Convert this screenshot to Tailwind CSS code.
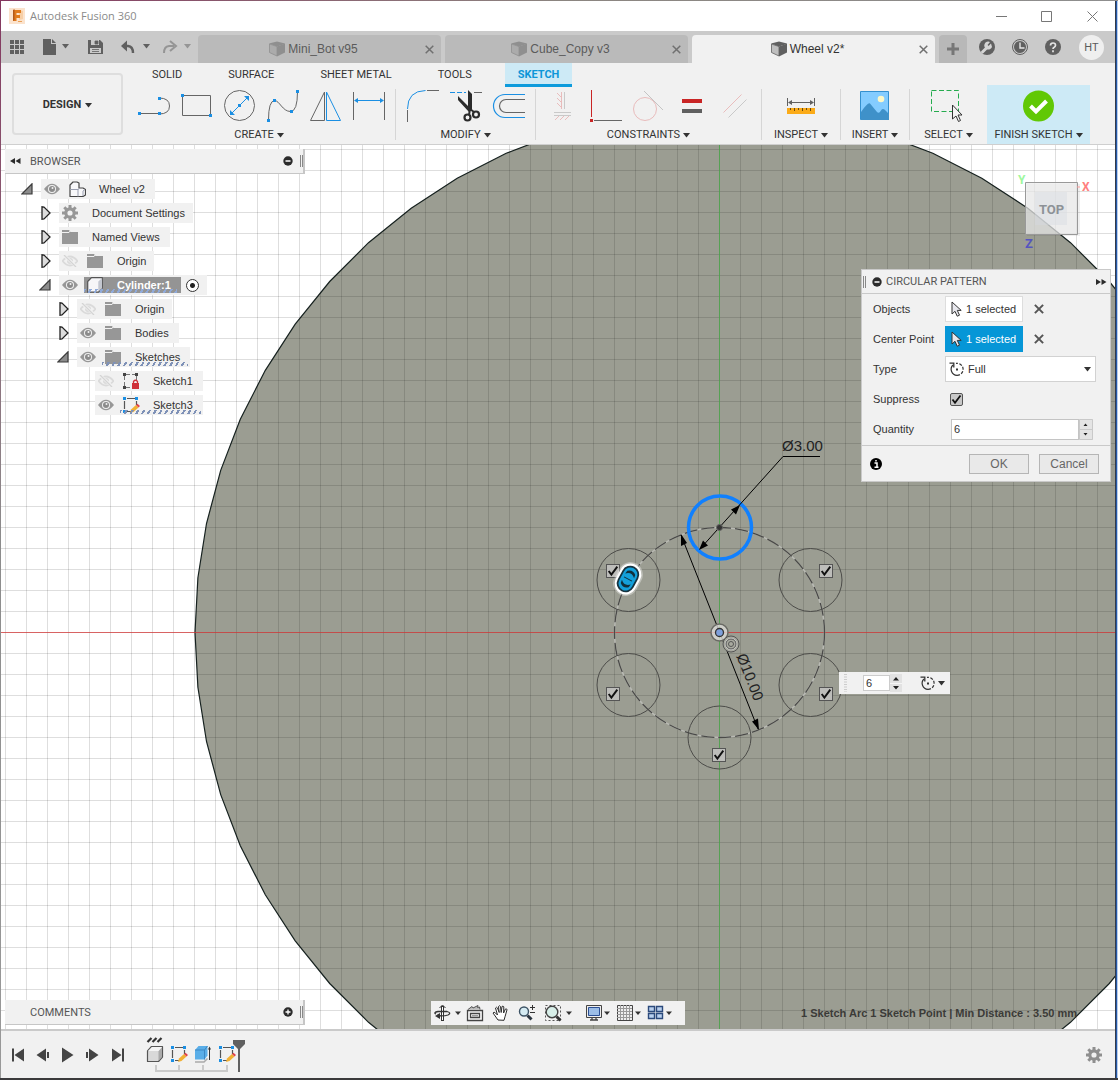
<!DOCTYPE html>
<html lang="en">
<head>
<meta charset="utf-8">
<meta name="viewport" content="width=device-width, initial-scale=1">
<title>Autodesk Fusion 360</title>
<script src="https://cdn.jsdelivr.net/npm/@tailwindcss/browser@4"></script>
</head>
<body class="flex h-screen flex-col overflow-hidden bg-[#3b3a3c] font-['Liberation_Sans',Arial,sans-serif] text-[11px] text-[#333]">

<svg class="hidden" aria-hidden="true">
  <symbol id="caret" viewBox="0 0 7 5"><path d="M0 0h7L3.5 4.5z" fill="currentColor"/></symbol>
  <symbol id="close" viewBox="0 0 9 9"><path d="M.7.7l7.6 7.6M8.3.7L.7 8.3" stroke="currentColor" stroke-width="1.500" fill="none"/></symbol>
  <symbol id="cube" viewBox="0 0 16 16"><path d="M0 2.500L8 .5l8 2-2 1-6 2z" fill="currentColor"/><path d="M.5 3v8.500L8 15V5.500z" fill="currentColor" fill-opacity=".35" stroke="currentColor" stroke-width=".8"/><path d="M16 2.500v9L8 15.500V5.500z" fill="currentColor"/></symbol>
  <symbol id="eye" viewBox="0 0 16 12"><path d="M0 6Q8-4.500 16 6Q8 16.500 0 6z" fill="#979797"/><circle cx="8" cy="6" r="4" fill="#f1f1f1"/><circle cx="8" cy="6" r="3" fill="#8b8b8b"/><circle cx="8.500" cy="5" r="1" fill="#f1f1f1"/></symbol>
  <symbol id="eyeoff" viewBox="0 0 16 12"><path d="M.500 6Q8-3 15.500 6Q8 15 .500 6z" fill="none" stroke="#dadada" stroke-width="1.800"/><circle cx="8" cy="6" r="3" fill="#dadada"/><path d="M1.500 0L15 12" stroke="#f1f1f1" stroke-width="3"/><path d="M2 0L14 12" stroke="#d4d4d4" stroke-width="1.300"/></symbol>
  <symbol id="folder" viewBox="0 0 16 14"><path d="M0 0h7l1.500 2H16v12H0z" fill="#979797"/><path d="M0 2.500h7l1-1.500" stroke="#f1f1f1" fill="none"/></symbol>
  <symbol id="gear" viewBox="0 0 16 16"><circle cx="8" cy="8" r="4.200" fill="none" stroke="currentColor" stroke-width="3.200"/><path d="M8 0v3M8 13v3M0 8h3M13 8h3M2.300 2.300l2.200 2.200M11.500 11.500l2.200 2.200M13.700 2.300l-2.200 2.200M4.500 11.500l-2.200 2.200" stroke="currentColor" stroke-width="3"/></symbol>
  <symbol id="closed" viewBox="0 0 10 14"><path d="M1 .8V13.200L3 13l6-6-6-6z" fill="#dcdcdc" stroke="#222" stroke-width="1.300"/></symbol>
  <symbol id="opened" viewBox="0 0 12 12"><path d="M11 .8V11H.8z" fill="#8c8c8c" stroke="#3a3a3a" stroke-width="1.200"/></symbol>
  <symbol id="body" viewBox="0 0 16 16"><path d="M.7 4.500L4.500.7h10.800v10.500l-4 4H.7z" fill="#f6f6f8" stroke="#555" stroke-width="1.200" stroke-linejoin="round"/><path d="M11.300 4.500l3.600-3.300v10l-3.600 3.300z" fill="#c3c7d0"/></symbol>
  <symbol id="sketch" viewBox="0 0 18 18"><path d="M5 2.500h8M2.500 5v8M14.500 5v4M5 15.500h4" stroke="#555" stroke-width="1.200"/><path d="M1 1h3v3H1zM13 1h3v3h-3zM1 14h3v3H1z" fill="#1b8fe3"/><path d="M8 17l1-3.500 5-4.500 2.500 2.500-5 4.500z" fill="#f2b134"/><path d="M14 9l1.500-1.200L18 10l-1.500 1.500z" fill="#e2424c"/></symbol>
  <symbol id="cursor" viewBox="0 0 11 16"><path d="M1 1v12l3-2.700 2.200 4.900 2.300-1-2.200-4.800h3.900z" fill="#e8e8ee" stroke="#333" stroke-width="1"/></symbol>
  <symbol id="full" viewBox="0 0 15 14"><path d="M4 3A6 6 0 0 0 8 13.300" fill="none" stroke="#333" stroke-width="1.200"/><path d="M8 13.300A6 6 0 1 0 7 1.400" fill="none" stroke="#333" stroke-width="1.200" stroke-dasharray="3 1.500"/><path d="M.5 1.200h4.300v4.300" fill="none" stroke="#333" stroke-width="1.300"/><path d="M7 6.500h2v2H7z" fill="#333"/></symbol>
  <symbol id="tick" viewBox="0 0 13 13"><path d="M2.500 6.500L5 9.800 10.500 2.500" fill="none" stroke="#111" stroke-width="1.800"/></symbol>
  <symbol id="minus" viewBox="0 0 10 10"><circle cx="5" cy="5" r="4.700" fill="#2b2b2b"/><path d="M2.500 5h5" stroke="#fff" stroke-width="1.500"/></symbol>
</svg>

<div class="h-px shrink-0 bg-linear-to-r from-[#83365f] via-[#8b8580] to-[#8e8e8e]"></div>

<div class="flex min-h-0 flex-1">
  <div class="w-px shrink-0 bg-linear-to-b from-[#83365f] via-[#8c8c8c] to-[#999]"></div>

  <main class="flex min-w-0 flex-1 flex-col bg-[#f1f1f1]">

    <header class="flex h-[30px] shrink-0 items-center bg-white pl-2">
      <svg class="size-4" viewBox="0 0 16 16"><path d="M0 0h16v16H0z" fill="#fbe3cd"/><path d="M10 2l4 1v8l-4 1z" fill="#f7cfa6"/><path d="M4 2h8v3H7.500v2H11v3H7.500v3H4z" fill="#e07b1e"/><path d="M4 2l1.500-1v11L4 13z" fill="#b3591a"/><path d="M9 13.500h4" stroke="#e9a15a"/></svg>
      <h1 class="pl-[5px] font-['Open_Sans',sans-serif] text-[11px] text-[#8a8a8a]">Autodesk Fusion 360</h1>
      <div class="ml-auto flex text-[#777]">
        <button aria-label="Minimize" class="grid h-[30px] w-[45px] place-items-center"><svg class="size-[11px]" viewBox="0 0 11 11"><path d="M0 5.500h11" stroke="currentColor"/></svg></button>
        <button aria-label="Maximize" class="grid h-[30px] w-[45px] place-items-center"><svg class="size-[11px]" viewBox="0 0 11 11"><path d="M.5.5h10v10H.5z" fill="none" stroke="currentColor"/></svg></button>
        <button aria-label="Close" class="grid h-[30px] w-[46px] place-items-center"><svg class="size-[11px]" viewBox="0 0 11 11"><path d="M.5.5l10 10M10.500.5l-10 10" stroke="currentColor"/></svg></button>
      </div>
    </header>

    <div class="flex h-8 shrink-0 items-end bg-[#cacaca] text-xs text-[#5b5b5b]">
      <div class="flex h-8 w-[197px] shrink-0 items-center">
        <button aria-label="Show data panel"><svg class="h-8 w-8" viewBox="1 31 32 32"><path d="M10 40h4v4h-4zM15 40h4v4h-4zM20 40h4v4h-4zM10 45h4v4h-4zM15 45h4v4h-4zM20 45h4v4h-4zM10 50h4v4h-4zM15 50h4v4h-4zM20 50h4v4h-4z" fill="#606060"/></svg></button>
        <button aria-label="File"><svg class="h-8 w-11" viewBox="33 31 44 32"><path d="M43 39h8v5h5v11H43z" fill="#606060"/><path d="M52 39l4 4h-4z" fill="#606060"/><path d="M62 44h7l-3.500 4.500z" fill="#606060"/></svg></button>
        <button aria-label="Save"><svg class="h-8 w-9" viewBox="77 31 36 32"><path d="M88 40h12l3 3v11H88z" fill="#606060"/><path d="M91 40h8v5h-8zM90 48h11v5H90z" fill="#cacaca"/><path d="M95 41h3v3h-3zM92 49.500h7M92 51.500h7" fill="#606060" stroke="#606060" stroke-width=".8"/></svg></button>
        <button aria-label="Undo"><svg class="h-8 w-10" viewBox="113 31 40 32"><path d="M123 46h5q5 .5 5 7" fill="none" stroke="#606060" stroke-width="2.400"/><path d="M121 46l6-5.500v11z" fill="#606060"/><path d="M143 44h7l-3.500 4.500z" fill="#606060"/></svg></button>
        <button aria-label="Redo"><svg class="h-8 w-10" viewBox="153 31 40 32"><path d="M174 46h-5q-5 .5-5 7" fill="none" stroke="#959595" stroke-width="2"/><path d="M170 41l6 5-6 5" fill="none" stroke="#959595" stroke-width="2"/><path d="M184 44h7l-3.500 4.500z" fill="#959595"/></svg></button>
      </div>
      <div class="flex min-w-0 flex-1 gap-1" role="tablist">
        <div role="tab" class="flex h-7 flex-1 items-center rounded-t-sm bg-[#bababa] pr-[7px]"><span class="flex flex-1 items-center justify-center gap-[3px] pl-1"><svg class="size-4 text-[#8f8f8f]"><use href="#cube"/></svg>Mini_Bot v95</span><button aria-label="Close Mini_Bot v95"><svg class="size-[9px] text-[#707070]"><use href="#close"/></svg></button></div>
        <div role="tab" class="flex h-7 flex-1 items-center rounded-t-sm bg-[#bababa] pr-[7px]"><span class="flex flex-1 items-center justify-center gap-[3px] pl-1"><svg class="size-4 text-[#8f8f8f]"><use href="#cube"/></svg>Cube_Copy v3</span><button aria-label="Close Cube_Copy v3"><svg class="size-[9px] text-[#707070]"><use href="#close"/></svg></button></div>
        <div role="tab" aria-selected="true" class="flex h-7 flex-1 items-center rounded-t-sm bg-[#f1f1f1] pr-[7px] text-[#333]"><span class="flex flex-1 items-center justify-center gap-[3px] pl-1"><svg class="size-4 text-[#606060]"><use href="#cube"/></svg>Wheel v2*</span><button aria-label="Close Wheel v2"><svg class="size-[9px] text-[#707070]"><use href="#close"/></svg></button></div>
      </div>
      <button aria-label="New tab" class="ml-1 grid h-7 w-7 place-items-center rounded-t-sm bg-[#b8b8b8]"><svg class="size-3" viewBox="0 0 12 12"><path d="M6 0v12M0 6h12" stroke="#777" stroke-width="3"/></svg></button>
      <div class="flex h-8 w-[148px] shrink-0 items-center">
        <button aria-label="Extensions"><svg class="h-8 w-9" viewBox="967 31 36 32"><circle cx="987" cy="47" r="8" fill="#606060"/><path d="M982.500 52l5-5" stroke="#d5d5d5" stroke-width="3" stroke-linecap="round"/><path d="M991 43.500l-2.500 2.500-1-1 2.500-3a4 4 0 1 0 2 5z" fill="#d5d5d5"/></svg></button>
        <button aria-label="Job status"><svg class="h-8 w-[34px]" viewBox="1003 31 34 32"><circle cx="1020" cy="47" r="7.500" fill="none" stroke="#606060"/><circle cx="1020" cy="47" r="6" fill="#606060"/><path d="M1020 42.500V48h4.500" stroke="#e5e5e5" stroke-width="1.400" fill="none"/></svg></button>
        <button aria-label="Help"><svg class="h-8 w-8" viewBox="1037 31 32 32"><circle cx="1053" cy="47" r="8" fill="#606060"/><path d="M1050.500 45.500q0-2.500 2.500-2.500t2.500 2.200q0 1.300-1.300 2-1.200.6-1.200 1.800M1053 50.300v1.900" fill="none" stroke="#e5e5e5" stroke-width="1.700"/></svg></button>
        <button aria-label="Account" class="ml-[10px] grid size-[25px] place-items-center rounded-full bg-[#efefef] pt-[2px] font-['Roboto',sans-serif] text-[11px]">HT</button>
      </div>
    </div>

    <section class="flex h-[82px] shrink-0 border-b border-[#cfcfcf] pl-[11px] font-['Roboto',sans-serif]">
      <button class="mt-[10px] flex h-[62px] w-[111px] shrink-0 items-center justify-center gap-[3px] rounded-sm border-2 border-[#dedede] pt-[2px] font-bold">DESIGN<svg class="ml-px h-[5px] w-[7px]"><use href="#caret"/></svg></button>
      <div class="min-w-0 flex-1">
        <nav class="flex h-[22px] items-start gap-5 pl-4 leading-6">
          <a href="#" class="px-[13px]">SOLID</a><a href="#" class="px-[13px]">SURFACE</a><a href="#" class="px-[13px]">SHEET METAL</a><a href="#" class="px-[13px]">TOOLS</a>
          <a href="#" class="z-10 h-6 border-b-[3px] border-[#0d9bdc] bg-[#cdeaf6] px-[13px] font-bold text-[#0d96d8]">SKETCH</a>
        </nav>
        <div class="flex h-[59px]">
          <div class="w-[272px] shrink-0 pt-[3px]">
            <div class="flex justify-center">
              <button aria-label="Line"><svg class="h-9 w-[43px]" viewBox="130 88 43 36"><path d="M139 113.500h20M159 98q10.500 0 10.500 8t-10.500 8" fill="none" stroke="#666"/><path d="M138 112h3v3h-3zM158 112h3v3h-3zM158 97h3v3h-3z" fill="#1b8fe3"/></svg></button>
              <button aria-label="Rectangle"><svg class="h-9 w-[43px]" viewBox="173 88 43 36"><path d="M182.500 95.500h28v20h-28z" fill="none" stroke="#666"/><path d="M181 94h3v3h-3zM209 114h3v3h-3z" fill="#1b8fe3"/></svg></button>
              <button aria-label="Circle"><svg class="h-9 w-[43px]" viewBox="216 88 43 36"><circle cx="239.500" cy="105.500" r="15" fill="none" stroke="#666"/><path d="M231 114l17-17" stroke="#1b8fe3"/><path d="M249 96v5l-5-5zM230 115v-5l5 5zM238 104h3v3h-3z" fill="#1b8fe3"/></svg></button>
              <button aria-label="Spline"><svg class="h-9 w-[43px]" viewBox="259 88 43 36"><path d="M268.500 120q0-19 6-19.500c5 0 8 11 16 11q7 0 7-20" fill="none" stroke="#666"/><path d="M267 119h3v3h-3zM273 99h3v3h-3zM290 110h3v3h-3zM296 90h3v3h-3z" fill="#1b8fe3"/></svg></button>
              <button aria-label="Mirror"><svg class="h-9 w-[43px]" viewBox="302 88 43 36"><path d="M324.500 92v28.500h-14z" fill="none" stroke="#666"/><path d="M326.500 92v28.500h14z" fill="none" stroke="#1b8fe3"/></svg></button>
              <button aria-label="Dimension"><svg class="h-9 w-[43px]" viewBox="345 88 43 36"><path d="M353.500 92v28M384.500 92v28" stroke="#666"/><path d="M355 100.500h28" stroke="#1b8fe3"/><path d="M354 100.500l4-2.500v5zM384 100.500l-4-2.500v5z" fill="#1b8fe3"/></svg></button>
            </div>
            <button class="mx-auto flex h-5 items-center gap-[3px] pt-[2px]">CREATE<svg class="h-[5px] w-[7px]"><use href="#caret"/></svg></button>
          </div>
          <div class="mt-1 mb-1 w-px bg-[#d6d6d6]"></div>
          <div class="w-[139px] shrink-0 pt-[3px]">
            <div class="flex justify-center">
              <button aria-label="Fillet"><svg class="h-9 w-[43px]" viewBox="401 88 43 36"><path d="M407.500 109q0-18 18-18.500" fill="none" stroke="#1b8fe3"/><path d="M407.500 110v12M427 90.500h12" stroke="#666"/></svg></button>
              <button aria-label="Trim"><svg class="h-9 w-[43px]" viewBox="444 88 43 36"><path d="M450 92.500h16" stroke="#1b8fe3" stroke-dasharray="5 2"/><path d="M474 92.500h8" stroke="#666"/><path d="M468 90l4 4v16l-4-2zM458 96l13 13-2 3-11-12z" fill="#2b2b2b"/><circle cx="467.500" cy="117.500" r="3" fill="none" stroke="#2b2b2b" stroke-width="2.200"/><circle cx="476" cy="114.500" r="3" fill="none" stroke="#2b2b2b" stroke-width="2.200"/><path d="M469 115l1-6 4 3" stroke="#2b2b2b" stroke-width="2" fill="none"/></svg></button>
              <button aria-label="Offset"><svg class="h-9 w-[43px]" viewBox="487 88 43 36"><path d="M525 94.500h-20a11.500 11.500 0 0 0 0 23h20" fill="none" stroke="#1b8fe3" stroke-width="1.200"/><path d="M525 99.500h-19a6.500 6.500 0 0 0 0 13h19" fill="none" stroke="#666" stroke-width="1.200"/></svg></button>
            </div>
            <button class="mx-auto flex h-5 items-center gap-[3px] pt-[2px]">MODIFY<svg class="h-[5px] w-[7px]"><use href="#caret"/></svg></button>
          </div>
          <div class="mt-1 mb-1 w-px bg-[#d6d6d6]"></div>
          <div class="w-[225px] shrink-0 pt-[3px]">
            <div class="flex justify-center">
              <button aria-label="Horizontal/Vertical"><svg class="h-9 w-[43px]" viewBox="541 88 43 36"><path d="M564.500 92v17M554 112.500h17M554 115.500h17" stroke="#c9c9c9"/><path d="M561.500 92v17M557 93l4 4M557 98l4 4M557 103l4 4M555 120l4-4M560 120l4-4M565 120l4-4" stroke="#e9bcbc"/></svg></button>
              <button aria-label="Perpendicular"><svg class="h-9 w-[43px]" viewBox="584 88 43 36"><path d="M591.500 90v27" stroke="#c92525"/><path d="M594 120.500h28" stroke="#666"/><path d="M590 119h3v3h-3z" fill="#c92525"/></svg></button>
              <button aria-label="Tangent"><svg class="h-9 w-[43px]" viewBox="627 88 43 36"><circle cx="645" cy="109" r="11.500" fill="none" stroke="#e9bcbc"/><path d="M644 91l19 19" stroke="#c4c4c4"/></svg></button>
              <button aria-label="Equal"><svg class="h-9 w-[43px]" viewBox="670 88 43 36"><path d="M682 99h20v4h-20z" fill="#c92525"/><path d="M682 109h20v4h-20z" fill="#606060"/></svg></button>
              <button aria-label="Parallel"><svg class="h-9 w-[43px]" viewBox="713 88 43 36"><path d="M723.500 112.500l18-18" stroke="#e9bcbc"/><path d="M728.500 117.500l18-18" stroke="#c9c9c9"/></svg></button>
            </div>
            <button class="mx-auto flex h-5 items-center gap-[3px] pt-[2px]">CONSTRAINTS<svg class="h-[5px] w-[7px]"><use href="#caret"/></svg></button>
          </div>
          <div class="mt-1 mb-1 w-px bg-[#d6d6d6]"></div>
          <div class="w-[78px] shrink-0 pt-[3px]">
            <button aria-label="Measure" class="mx-auto block"><svg class="h-9 w-[42px]" viewBox="780 88 42 36"><path d="M787.500 98v8M814.500 98v8M789 102.500h24" stroke="#606060"/><path d="M788 102.500l4-2.500v5zM814 102.500l-4-2.500v5z" fill="#606060"/><path d="M787 108h28v6h-28z" fill="#fbab18"/><path d="M790.500 108v2M794.500 108v3M798.500 108v2M802.500 108v3M806.500 108v2M810.500 108v3" stroke="#6b4a10"/></svg></button>
            <button class="mx-auto flex h-5 items-center gap-[3px] pt-[2px]">INSPECT<svg class="h-[5px] w-[7px]"><use href="#caret"/></svg></button>
          </div>
          <div class="mt-1 mb-1 w-px bg-[#d6d6d6]"></div>
          <div class="w-[68px] shrink-0 pt-[3px]">
            <button aria-label="Insert image" class="mx-auto block"><svg class="h-9 w-[42px]" viewBox="854 88 42 36"><path d="M860.500 91.500h28v28h-28z" fill="#84ccff" stroke="#3490cf"/><path d="M861 112q7-10 9-8.500l7 8.500q2 2 4-1.500 2-3 5 .5l3 3v6h-28z" fill="#3f91c9"/><circle cx="881" cy="99" r="3.300" fill="#fdf8c8"/></svg></button>
            <button class="mx-auto flex h-5 items-center gap-[3px] pt-[2px]">INSERT<svg class="h-[5px] w-[7px]"><use href="#caret"/></svg></button>
          </div>
          <div class="mt-1 mb-1 w-px bg-[#d6d6d6]"></div>
          <div class="w-[77px] shrink-0 pt-[3px]">
            <button aria-label="Select" class="mx-auto block"><svg class="h-9 w-[43px]" viewBox="927 88 43 36"><path d="M931.500 90.500h27v21h-27z" fill="none" stroke="#25ab4e" stroke-dasharray="5 2.500"/><path d="M952.500 105v14l3.500-3 2.500 5.500 2-1-2.500-5.500h4z" fill="#f5f5f5" stroke="#333"/></svg></button>
            <button class="mx-auto flex h-5 items-center gap-[3px] pt-[2px]">SELECT<svg class="h-[5px] w-[7px]"><use href="#caret"/></svg></button>
          </div>
          <div class="w-[103px] shrink-0 bg-[#cdeaf6] pt-[3px]">
            <button aria-label="Finish sketch" class="mx-auto block"><svg class="h-9 w-[43px]" viewBox="1017 88 43 36"><circle cx="1038.500" cy="106" r="15.500" fill="#61c805"/><path d="M1030.500 106l5.500 5.500 10.500-10.500" fill="none" stroke="#fff" stroke-width="4"/></svg></button>
            <button class="mx-auto flex h-5 items-center gap-[3px] pt-[2px] whitespace-nowrap">FINISH SKETCH<svg class="h-[5px] w-[7px]"><use href="#caret"/></svg></button>
          </div>
        </div>
      </div>
    </section>

    <section class="relative min-h-0 flex-1 overflow-hidden bg-white">
      <svg class="absolute inset-0 h-full w-full" role="img" aria-label="Wheel sketch">
        <defs>
          <pattern id="grid" width="21" height="21" patternUnits="userSpaceOnUse" x="5" y="2"><path d="M0 .5h21M.5 0v21" stroke="#000" stroke-opacity=".13"/></pattern>
        </defs>
        <g transform="translate(-1 -145)">
          <polygon id="wheel" fill="#9b9d92" stroke="#16211f" stroke-width="1.200"/>
          <rect width="4000" height="3000" fill="url(#grid)"/>
          <path d="M719.500 0v3000" stroke="#4aa84a" stroke-opacity=".8"/>
          <path d="M0 632.500h4000" stroke="#d63a3a" stroke-opacity=".75"/>

          <circle cx="719.500" cy="632.500" r="105" fill="none" stroke="#b9bab4" stroke-width="1.500"/>
          <circle cx="719.500" cy="632.500" r="105" fill="none" stroke="#4a4a48" stroke-width="1.300" stroke-dasharray="13 4"/>
          <g fill="none" stroke="#4c4c49"><circle cx="628.500" cy="580" r="31.500"/><circle cx="810.500" cy="580" r="31.500"/><circle cx="628.500" cy="685" r="31.500"/><circle cx="810.500" cy="685" r="31.500"/><circle cx="719.500" cy="737.500" r="31.500"/></g>
          <circle cx="720" cy="527.500" r="31.500" fill="none" stroke="#1080ff" stroke-width="3.500"/>

          <path d="M681 535l77 194M700 549l83-92.500h37" fill="none" stroke="#000"/>
          <path d="M681 534l6 9-6 3zM759 730l-7-8.500 6-3zM740 505l-4 9.500-5-5zM699 550l4-9.500 5 5z" fill="#000"/>
          <circle cx="719.500" cy="527.500" r="3" fill="#333" stroke="#666"/>
          <circle cx="719.500" cy="632.500" r="8.500" fill="#dcdcd8" fill-opacity=".8" stroke="#6a6a64" stroke-width="1.500"/>
          <circle cx="719.500" cy="632.500" r="4" fill="#7ea0dc" stroke="#333" stroke-width="1.300"/>
          <g fill="none" stroke="#555"><circle cx="731" cy="644" r="8" fill="#a9aaa0"/><circle cx="731" cy="644" r="5.500" stroke="#ddd"/><circle cx="731" cy="644" r="5"/><circle cx="731" cy="644" r="2.500"/></g>
          <g font-size="15" fill="#222"><text x="782" y="451">Ø3.00</text><text transform="translate(750 677) rotate(68.400)" y="5" text-anchor="middle">Ø10.00</text></g>
        </g>
      </svg>

      <label class="absolute top-[419px] left-[605px] grid size-[14px]"><input type="checkbox" checked aria-label="Instance 2" class="col-start-1 row-start-1 size-[14px] appearance-none border border-[#555] bg-[#bdbdba]"><svg class="pointer-events-none col-start-1 row-start-1 size-[14px]"><use href="#tick"/></svg></label>
      <label class="absolute top-[419px] left-[818px] grid size-[14px]"><input type="checkbox" checked aria-label="Instance 6" class="col-start-1 row-start-1 size-[14px] appearance-none border border-[#555] bg-[#bdbdba]"><svg class="pointer-events-none col-start-1 row-start-1 size-[14px]"><use href="#tick"/></svg></label>
      <label class="absolute top-[542px] left-[605px] grid size-[14px]"><input type="checkbox" checked aria-label="Instance 3" class="col-start-1 row-start-1 size-[14px] appearance-none border border-[#555] bg-[#bdbdba]"><svg class="pointer-events-none col-start-1 row-start-1 size-[14px]"><use href="#tick"/></svg></label>
      <label class="absolute top-[542px] left-[818px] grid size-[14px]"><input type="checkbox" checked aria-label="Instance 5" class="col-start-1 row-start-1 size-[14px] appearance-none border border-[#555] bg-[#bdbdba]"><svg class="pointer-events-none col-start-1 row-start-1 size-[14px]"><use href="#tick"/></svg></label>
      <label class="absolute top-[603px] left-[711px] grid size-[14px]"><input type="checkbox" checked aria-label="Instance 4" class="col-start-1 row-start-1 size-[14px] appearance-none border border-[#555] bg-[#bdbdba]"><svg class="pointer-events-none col-start-1 row-start-1 size-[14px]"><use href="#tick"/></svg></label>

      <svg class="absolute top-[414px] left-[607px] h-10 w-10" viewBox="-20 -20 40 40"><g transform="rotate(28)"><rect x="-12.500" y="-17.500" width="25" height="35" rx="12.500" fill="#fff" fill-opacity=".35"/><rect x="-11" y="-16" width="22" height="32" rx="11" fill="#fff"/><rect x="-8" y="-13" width="16" height="26" rx="8" fill="#14a0da" stroke="#17333f" stroke-width="1.800"/><path d="M-5-3.500Q0-8.500 5-3.500L4.500-7q-4.500-4-9 0zM-5 3.500Q0 8.500 5 3.500L4.500 7q-4.500 4-9 0z" fill="#12303c"/><path d="M-4.500 0h9" stroke="#12303c"/></g></svg>

      <div class="absolute top-[527px] left-[838px] flex h-[22px] w-[111px] items-center bg-[#f1f1f1]">
        <svg class="h-5 w-6" viewBox="0 0 24 20"><path d="M6.500 1v18" stroke="#ccc" stroke-width="3" stroke-dasharray="1 1.500"/></svg>
        <input aria-label="Quantity" value="6" class="h-4 w-[27px] border border-[#ccc] bg-white px-[2px]">
        <svg class="h-[18px] w-3 bg-[#e2e2e2]" viewBox="0 0 12 18"><path d="M3 6.500h6L6 3zM3 12h6l-3 3.500z" fill="#222"/><path d="M0 9.500h12" stroke="#f5f5f5"/></svg>
        <button aria-label="Pattern type" class="ml-[18px] flex items-center gap-[3px]"><svg class="h-[14px] w-[15px]"><use href="#full"/></svg><svg class="h-[5px] w-[7px]"><use href="#caret"/></svg></button>
      </div>

      <aside class="absolute top-1 left-1 w-[300px]">
        <div class="flex h-[25px] items-center border-r-2 border-b border-[#c6c6c6] bg-[#f1f1f1] pl-[5px] font-['Roboto',sans-serif] text-[#555]">
          <svg class="h-[6px] w-[11px]" viewBox="0 0 11 6"><path d="M5 0v6L0 3zM10.500 0v6l-5-3z" fill="#2b2b2b"/></svg>
          <h2 class="pt-[2px] pl-[9px]">BROWSER</h2>
          <button aria-label="Collapse browser" class="ml-auto"><svg class="size-[10px]"><use href="#minus"/></svg></button>
          <span class="ml-[7px] h-3 w-[3px] border-x border-[#888]"></span>
        </div>
        <ul class="flex flex-col gap-1 pt-[5px] pl-4">
          <li class="flex h-5 items-center"><svg class="mr-2 size-3"><use href="#opened"/></svg><div class="flex h-5 items-center bg-[#f1f1f1] pr-[10px]"><svg class="mr-[6px] ml-[3px] h-3 w-4"><use href="#eye"/></svg><span class="grid w-[22px] place-items-center"><svg class="h-4 w-[17px]" viewBox="0 0 17 16"><path d="M1 4l3-3h4l2 1v5h4l2.500 1.500V14L14 15.500H1z" fill="#f8f8fa" stroke="#444" stroke-width="1.200" stroke-linejoin="round"/><path d="M1 8.500h8v7M9 8.500l2-1.500M14 15V10l2-1.500" stroke="#9a9fb0" fill="none"/></svg></span><span class="pl-[11px]">Wheel v2</span></div></li>
          <li class="flex h-5 items-center pl-5"><svg class="mr-2 h-[14px] w-[10px]"><use href="#closed"/></svg><div class="flex h-5 items-center bg-[#f1f1f1] pr-2"><span class="grid w-[22px] place-items-center text-[#979797]"><svg class="size-4"><use href="#gear"/></svg></span><span class="pl-[11px]">Document Settings</span></div></li>
          <li class="flex h-5 items-center pl-5"><svg class="mr-2 h-[14px] w-[10px]"><use href="#closed"/></svg><div class="flex h-5 items-center bg-[#f1f1f1] pr-[10px]"><span class="grid w-[22px] place-items-center"><svg class="h-[14px] w-4"><use href="#folder"/></svg></span><span class="pl-[11px]">Named Views</span></div></li>
          <li class="flex h-5 items-center pl-5"><svg class="mr-2 h-[14px] w-[10px]"><use href="#closed"/></svg><div class="flex h-5 items-center bg-[#f1f1f1] pr-2"><svg class="mr-[6px] ml-[3px] h-3 w-4"><use href="#eyeoff"/></svg><span class="grid w-[22px] place-items-center"><svg class="h-[14px] w-4"><use href="#folder"/></svg></span><span class="pl-[11px]">Origin</span></div></li>
          <li class="flex h-5 items-center pl-[18px]"><svg class="mr-2 size-3"><use href="#opened"/></svg><div class="flex h-5 items-center bg-[#f1f1f1] pr-2"><svg class="mr-[6px] ml-[3px] h-3 w-4"><use href="#eye"/></svg><div class="relative flex h-4 items-center bg-[#949494] pr-[10px] font-bold text-white"><span class="grid w-[22px] place-items-center"><svg class="size-4"><use href="#body"/></svg></span><span class="pl-[11px]">Cylinder:1</span><span class="absolute right-1 bottom-0 left-0 h-1 bg-[repeating-linear-gradient(120deg,#8fa9d8_0px,#8fa9d8_2px,transparent_2px,transparent_5px)]"></span></div><input type="radio" checked aria-label="Activate Cylinder:1" class="ml-[5px] size-[13px] appearance-none rounded-full border border-[#333] bg-[radial-gradient(#222_2px,white_3px)]"></div></li>
          <li class="flex h-5 items-center pl-[38px]"><svg class="mr-2 h-[14px] w-[10px]"><use href="#closed"/></svg><div class="flex h-5 items-center bg-[#f1f1f1] pr-2"><svg class="mr-[6px] ml-[3px] h-3 w-4"><use href="#eyeoff"/></svg><span class="grid w-[22px] place-items-center"><svg class="h-[14px] w-4"><use href="#folder"/></svg></span><span class="pl-[11px]">Origin</span></div></li>
          <li class="flex h-5 items-center pl-[38px]"><svg class="mr-2 h-[14px] w-[10px]"><use href="#closed"/></svg><div class="flex h-5 items-center bg-[#f1f1f1] pr-[10px]"><svg class="mr-[6px] ml-[3px] h-3 w-4"><use href="#eye"/></svg><span class="grid w-[22px] place-items-center"><svg class="h-[14px] w-4"><use href="#folder"/></svg></span><span class="pl-[11px]">Bodies</span></div></li>
          <li class="flex h-5 items-center pl-9"><svg class="mr-2 size-3"><use href="#opened"/></svg><div class="flex h-5 items-center bg-[#f1f1f1] pr-[2px]"><svg class="mr-[6px] ml-[3px] h-3 w-4"><use href="#eye"/></svg><div class="relative flex h-[18px] items-center pr-2"><span class="grid w-[22px] place-items-center"><svg class="h-[14px] w-4"><use href="#folder"/></svg></span><span class="pl-[11px]">Sketches</span><span class="absolute inset-x-0 bottom-0 h-1 bg-[repeating-linear-gradient(120deg,#7f92b8_0px,#7f92b8_2px,transparent_2px,transparent_5px)]"></span></div></div></li>
          <li class="flex h-5 items-center pl-[74px]"><div class="flex h-5 items-center bg-[#f1f1f1] pr-[10px]"><svg class="mr-[6px] ml-[3px] h-3 w-4"><use href="#eyeoff"/></svg><span class="grid w-[22px] place-items-center"><svg class="size-[18px]" viewBox="0 0 18 18"><path d="M4 2.500h10M2.500 4v10M14.500 4v4M4 15.500h4" stroke="#777" stroke-dasharray="4 2"/><path d="M1 1h3v3H1zM13 1h3v3h-3zM1 14h3v3H1z" fill="#444"/><path d="M10 11h7v6h-7z" fill="#cf3038"/><path d="M11.500 11V9.500q2-2.500 4 0V11" fill="none" stroke="#cf3038" stroke-width="1.300"/></svg></span><span class="pl-[11px]">Sketch1</span></div></li>
          <li class="flex h-5 items-center pl-[74px]"><div class="flex h-5 items-center bg-[#f1f1f1] pr-[2px]"><svg class="mr-[6px] ml-[3px] h-3 w-4"><use href="#eye"/></svg><div class="relative flex h-[18px] items-center pr-2"><span class="grid w-[22px] place-items-center"><svg class="size-[18px]"><use href="#sketch"/></svg></span><span class="pl-[11px]">Sketch3</span><span class="absolute inset-x-0 bottom-0 h-1 bg-[repeating-linear-gradient(120deg,#7f92b8_0px,#7f92b8_2px,transparent_2px,transparent_5px)]"></span></div></div></li>
        </ul>
      </aside>

      <svg class="absolute top-[25px] right-5 h-[85px] w-20 font-['Roboto',sans-serif] font-bold" viewBox="1015 170 80 85">
        <text x="1018" y="184" font-size="12" fill="#9df79d">Y</text>
        <path d="M1027 184h53v52h-53z" fill="#000" fill-opacity=".06"/>
        <path d="M1025.500 182.500h52v52h-52z" fill="#ececec" fill-opacity=".72" stroke="#999"/>
        <path d="M1035 192h32v33h-32z" fill="#d5dae2" fill-opacity=".4"/>
        <text x="1051.500" y="214" font-size="13" fill="#8d9297" text-anchor="middle">TOP</text>
        <path d="M1077 187h3" stroke="#ff9a9a"/>
        <text x="1082" y="191" font-size="12" fill="#ff8080">X</text>
        <text x="1025" y="248" font-size="13" fill="#5555c0">Z</text>
      </svg>

      <form class="absolute top-[124px] right-1 w-[250px] border border-[#c9c9c9] bg-[#f1f1f1]">
        <div class="flex h-6 items-center border-b border-[#c9c9c9] pr-[3px] pl-px font-['Roboto',sans-serif] text-[#555]">
          <span class="mr-[6px] h-3 w-[3px] border-x border-[#888]"></span>
          <svg class="size-[10px]"><use href="#minus"/></svg>
          <h2 class="pt-[2px] pl-1">CIRCULAR PATTERN</h2>
          <svg class="ml-auto h-[6px] w-[11px]" viewBox="0 0 11 6"><path d="M0 0v6l5-3zM5.500 0v6l5-3z" fill="#2b2b2b"/></svg>
        </div>
        <div class="border-b border-[#c9c9c9] pl-[11px]">
          <div class="flex h-[30px] items-center"><span class="w-[72px]">Objects</span><button type="button" class="flex h-[26px] w-[78px] items-center gap-1 border border-[#ddd] bg-white pl-[5px] whitespace-nowrap"><svg class="h-4 w-[11px] shrink-0"><use href="#cursor"/></svg>1 selected</button><button type="button" aria-label="Clear objects" class="ml-[11px] text-[#555]"><svg class="size-[10px]" viewBox="0 0 9 9"><path d="M.8.8l7.400 7.400M8.200.8L.8 8.200" stroke="currentColor" stroke-width="1.800"/></svg></button></div>
          <div class="flex h-[30px] items-center"><span class="w-[72px]">Center Point</span><button type="button" class="flex h-[26px] w-[78px] items-center gap-1 border border-[#0696d7] bg-[#0696d7] pl-[5px] whitespace-nowrap text-white"><svg class="h-4 w-[11px] shrink-0"><use href="#cursor"/></svg>1 selected</button><button type="button" aria-label="Clear center point" class="ml-[11px] text-[#555]"><svg class="size-[10px]" viewBox="0 0 9 9"><path d="M.8.8l7.400 7.400M8.200.8L.8 8.200" stroke="currentColor" stroke-width="1.800"/></svg></button></div>
          <div class="flex h-[30px] items-center"><label for="type" class="w-[72px]">Type</label><div class="relative"><select id="type" class="h-[26px] w-[151px] appearance-none border border-[#d2d2d2] bg-white pl-[22px]"><option>Full</option></select><svg class="pointer-events-none absolute top-[6px] left-1 h-[14px] w-[15px]"><use href="#full"/></svg><svg class="pointer-events-none absolute top-[11px] right-[5px] h-[5px] w-[7px]"><use href="#caret"/></svg></div></div>
          <div class="flex h-[30px] items-center"><label for="suppress" class="w-[77px]">Suppress</label><div class="grid"><input id="suppress" type="checkbox" checked class="col-start-1 row-start-1 size-[13px] appearance-none rounded-xs border border-[#555] bg-[#c8c8c8]"><svg class="pointer-events-none col-start-1 row-start-1 size-[13px]"><use href="#tick"/></svg></div></div>
          <div class="flex h-[31px] items-center"><label for="qty" class="w-[78px]">Quantity</label><input id="qty" value="6" class="h-[21px] w-[128px] border border-[#c4c4c4] bg-white px-[2px] pb-[2px]"><svg class="h-[21px] w-[14px] bg-[#e4e4e4]" viewBox="0 0 14 21"><path d="M.5.5h13v20H.5z" fill="none" stroke="#c9c9c9"/><path d="M0 10.500h14" stroke="#c9c9c9"/><path d="M4.500 7h4L6.500 4.500zM4.500 14h4l-2 2.500z" fill="#222"/></svg></div>
        </div>
        <div class="flex h-[35px] items-center pr-[11px] pl-2 text-xs text-[#666]">
          <svg class="size-3" viewBox="0 0 12 12"><circle cx="6" cy="6" r="6" fill="#000"/><path d="M4.500 5h2.500v4M4.500 9.300h4M6 2v1.600" stroke="#fff" stroke-width="1.500" fill="none"/></svg>
          <button type="button" class="mr-[10px] ml-auto h-5 w-[60px] border border-[#b5b5b5] bg-[#e9e9e9]">OK</button>
          <button type="button" class="h-5 w-[60px] border border-[#b5b5b5] bg-[#e9e9e9]">Cancel</button>
        </div>
      </form>

      <div class="absolute bottom-1 left-1 flex h-[25px] w-[300px] items-center border-r-2 border-b border-[#c6c6c6] bg-[#f1f1f1] pl-[25px] font-['Roboto',sans-serif] text-[#555]">
        <h2 class="pt-[2px]">COMMENTS</h2>
        <button aria-label="Add comment" class="ml-auto"><svg class="size-[10px]" viewBox="0 0 10 10"><circle cx="5" cy="5" r="4.700" fill="#2b2b2b"/><path d="M2.500 5h5M5 2.500v5" stroke="#fff" stroke-width="1.300"/></svg></button>
        <span class="ml-[7px] h-3 w-[3px] border-x border-[#888]"></span>
      </div>

      <div class="absolute bottom-1 left-1/2 flex h-6 w-[254px] -translate-x-1/2 bg-[#f1f1f1]">
        <button aria-label="Orbit"><svg class="h-6 w-8" viewBox="431 1001 32 24"><path d="M442.500 1006v15" stroke="#333" stroke-width="3"/><path d="M442.500 1007v13" stroke="#fff"/><path d="M439.500 1008l3-3 3 3" fill="none" stroke="#333"/><path d="M436 1014q-3-1.500 2-2.500h9q5 1.500 1 3.500-5 1.500-11 .5" fill="none" stroke="#333" stroke-width="1.300"/><path d="M440 1013v6l-5-3z" fill="#333"/><path d="M455 1011.500h6l-3 3.500z" fill="#333"/></svg></button>
        <button aria-label="Look at"><svg class="h-6 w-[26px]" viewBox="463 1001 26 24"><path d="M467.500 1010.500h15v10h-15zM470.500 1013.500h9v4h-9z" fill="#f8f8f8" stroke="#444" stroke-width="1.300"/><path d="M472 1015h6v1.500h-6z" fill="#999"/><path d="M468 1009.500l4-3 1 1.500 5-2.500-.5 2 2-.5.500 2.500" fill="#bbb" stroke="#555"/></svg></button>
        <button aria-label="Pan"><svg class="h-6 w-[26px]" viewBox="489 1001 26 24"><path d="M498 1020l-5-7q1-1.500 2.500 0l2 2-2-7q1-1.500 2 0l1.700 4.500-.7-6q1-1.500 2 0l.7 6 .8-6q1.200-1 1.800.3l-.2 6.200 1.800-4q1.500-.6 1.600.8l-2 7-1 3.500z" fill="#fff" stroke="#2b2b2b"/></svg></button>
        <button aria-label="Zoom"><svg class="h-6 w-[26px]" viewBox="515 1001 26 24"><circle cx="524" cy="1011.500" r="4.500" fill="#d5ebf3" stroke="#3c5264" stroke-width="1.400"/><path d="M527.500 1015.500l4 4" stroke="#2b3540" stroke-width="3"/><path d="M530 1007.500h5M532.500 1005v5M530 1012.500h5" stroke="#333"/></svg></button>
        <button aria-label="Fit"><svg class="h-6 w-[38px]" viewBox="541 1001 38 24"><path d="M545.500 1005.500h15v15h-15z" fill="none" stroke="#555" stroke-dasharray="2 2"/><circle cx="552" cy="1012" r="5.800" fill="#d8efe9" stroke="#444" stroke-width="1.400"/><path d="M556.500 1016.500l4 4" stroke="#333" stroke-width="3"/><path d="M566 1011.500h6l-3 3.500z" fill="#333"/></svg></button>
        <button aria-label="Display settings"><svg class="h-6 w-[34px]" viewBox="579 1001 34 24"><path d="M586.500 1005.500h15v12h-15z" fill="#eee" stroke="#444"/><path d="M588.500 1007.500h11v8h-11z" fill="#9cbde6" stroke="#2b4f94"/><path d="M590 1020h8M592 1018v2h4v-2" fill="none" stroke="#444" stroke-width="1.300"/><path d="M604 1011.500h6l-3 3.500z" fill="#333"/></svg></button>
        <button aria-label="Grid and snaps"><svg class="h-6 w-[30px]" viewBox="613 1001 30 24"><path d="M617.500 1005.500h15v15h-15z" fill="#eee" stroke="#444"/><path d="M620.500 1005v15M623.500 1005v15M626.500 1005v15M629.500 1005v15M617 1008.500h15M617 1011.500h15M617 1014.500h15M617 1017.500h15" stroke="#999"/><path d="M635 1011.500h6l-3 3.500z" fill="#333"/></svg></button>
        <button aria-label="Viewports"><svg class="h-6 w-[31px]" viewBox="643 1001 31 24"><path d="M648.500 1006.500h6v5h-6zM656.500 1006.500h6v5h-6zM648.500 1013.500h6v5h-6zM656.500 1013.500h6v5h-6z" fill="#b9d0ee" stroke="#2b4a7c" stroke-width="1.400"/><path d="M666 1011.500h6l-3 3.500z" fill="#333"/></svg></button>
      </div>

      <p class="absolute right-[38px] bottom-[9px] text-[11px] leading-[14px] font-bold whitespace-nowrap text-[#3b3b38]">1 Sketch Arc 1 Sketch Point | Min Distance : 3.50 mm</p>
    </section>

    <footer class="flex h-[49px] shrink-0 items-center border-t-2 border-[#cacaca] pr-[13px] pl-[5px]">
      <button aria-label="Go to start"><svg class="h-[47px] w-[25px]" viewBox="6 1031 25 47"><path d="M12 1048.500h2v13h-2zM24 1048.500v13l-9.500-6.500z" fill="#444"/></svg></button>
      <button aria-label="Step back"><svg class="h-[47px] w-[25px]" viewBox="31 1031 25 47"><path d="M46 1048.500v13l-9.500-6.500zM47 1052h2v6h-2z" fill="#444"/></svg></button>
      <button aria-label="Play"><svg class="h-[47px] w-[25px]" viewBox="56 1031 25 47"><path d="M62 1047.500v15l11.500-7.500z" fill="#444"/></svg></button>
      <button aria-label="Step forward"><svg class="h-[47px] w-[25px]" viewBox="81 1031 25 47"><path d="M89 1048.500v13l9.500-6.500zM86 1052h2v6h-2z" fill="#444"/></svg></button>
      <button aria-label="Go to end"><svg class="h-[47px] w-[25px]" viewBox="106 1031 25 47"><path d="M112 1048.500v13l9.500-6.500zM122 1048.500h2v13h-2z" fill="#444"/></svg></button>
      <button aria-label="Component feature" class="ml-3"><svg class="h-[47px] w-6" viewBox="143 1031 24 47"><path d="M147.500 1042l4-4M152.500 1042l4-4M157.500 1042l4-4" stroke="#333" stroke-width="2.200"/><path d="M147.500 1051l4-4.500h11v10.500l-4 4.500h-11z" fill="#d9d9d9" stroke="#555" stroke-width="1.200" stroke-linejoin="round"/><path d="M158.500 1051v10l3.500-4v-10z" fill="#aaa"/><path d="M148 1051l4-4h10l-3.500 4z" fill="#f5f5f5"/><path d="M156 1065v6h11" fill="none" stroke="#cacaca" stroke-width="2"/></svg></button>
      <button aria-label="Sketch feature"><svg class="h-[47px] w-6" viewBox="167 1031 24 47"><use href="#sketch" x="170" y="1045" width="18" height="18"/><path d="M167 1071h24M179 1065v6" fill="none" stroke="#cacaca" stroke-width="2"/></svg></button>
      <button aria-label="Extrude feature"><svg class="h-[47px] w-6" viewBox="191 1031 24 47"><path d="M195 1050l3.500-4h9v9.500l-3 4h-9.500z" fill="#5aaee8"/><path d="M195 1050h9.500v9.500M204.500 1050l3-4" fill="none" stroke="#3c88c4"/><path d="M195 1062h9l3.500-3.500" fill="none" stroke="#aaa" stroke-width="1.500"/><path d="M209.500 1048v12" stroke="#333"/><path d="M208 1049.500l1.500-3 1.500 3z" fill="#333"/><path d="M191 1071h24M203 1065v6" fill="none" stroke="#cacaca" stroke-width="2"/></svg></button>
      <button aria-label="Active sketch feature"><svg class="h-[47px] w-8" viewBox="215 1031 32 47"><use href="#sketch" x="218" y="1045" width="18" height="18"/><path d="M215 1071h12v-6" fill="none" stroke="#cacaca" stroke-width="2"/><path d="M233 1040h12v4l-5 5v23h-2v-23l-5-5z" fill="#606060"/></svg></button>
      <button aria-label="Preferences" class="ml-auto text-[#8f8f8f]"><svg class="size-4"><use href="#gear"/></svg></button>
    </footer>
  </main>

  <div class="w-px shrink-0 bg-[#333b4a]"></div>
  <div class="w-px shrink-0 bg-[#2458a8]"></div>
  <div class="w-px shrink-0 bg-[#b9cdec]"></div>
</div>
<div class="h-[2px] shrink-0 bg-[#3b3a3c]"></div>

<script>
  // The wheel is displayed as a 60-sided polygon.
  const points = [];
  for (let i = 0; i < 60; i++) {
    const a = i * Math.PI / 30;
    points.push((719.5 + 524.5 * Math.cos(a)).toFixed(1) + ',' + (632.5 + 524.5 * Math.sin(a)).toFixed(1));
  }
  document.getElementById('wheel').setAttribute('points', points.join(' '));
</script>
</body>
</html>
